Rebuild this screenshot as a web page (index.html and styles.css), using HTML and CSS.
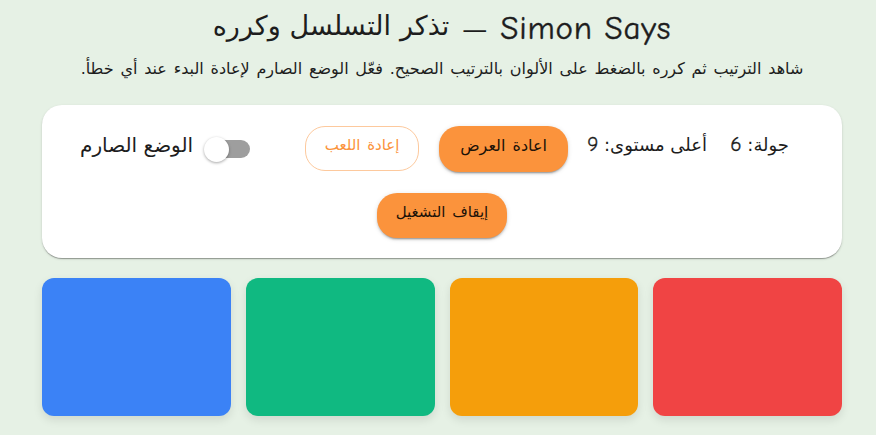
FILE: index.html
```html
<!DOCTYPE html>
<html lang="ar" dir="rtl">
<head>
<meta charset="utf-8">
<title>Simon Says</title>
<link rel="stylesheet" href="styles.css">
</head>
<body>
<main class="game">
  <h1 class="title"><span class="latin" dir="ltr">Simon Says</span><span class="dash">—</span><span class="title-ar">تذكر التسلسل وكرره</span></h1>
  <p class="intro">شاهد الترتيب ثم كرره بالضغط على الألوان بالترتيب الصحيح. فعّل الوضع الصارم لإعادة البدء عند أي خطأ.</p>
  <section class="panel">
    <div class="row">
      <span class="stat round">جولة: <span class="num">6</span></span>
      <span class="stat best">أعلى مستوى: <span class="num">9</span></span>
      <button class="btn filled show">اعادة العرض</button>
      <button class="btn outlined">إعادة اللعب</button>
      <label class="strict"><span class="switch"><i class="knob"></i></span><span class="stat strict-text">الوضع الصارم</span></label>
    </div>
    <div class="row second">
      <button class="btn filled stop">إيقاف التشغيل</button>
    </div>
  </section>
  <section class="pads">
    <div class="pad red"></div>
    <div class="pad amber"></div>
    <div class="pad green"></div>
    <div class="pad blue"></div>
  </section>
</main>
</body>
</html>
```
FILE: styles.css
```css
* { box-sizing: border-box; }
body { margin: 0; height: 435px; overflow: hidden; background: #e6f1e5; color: #1d1d1d; font-family: "DejaVu Sans", sans-serif; }
.game { width: 800px; margin: 0 34px 0 42px; }
.title { display: flex; justify-content: center; align-items: center; gap: 13px; margin: 0; height: 52px; font-weight: 400; white-space: nowrap; }
.latin { font: 400 33px/40px "Comic Neue", "Patrick Hand", cursive, Lato, sans-serif; letter-spacing: .75px; padding-top: 4px; -webkit-text-stroke: .4px #1d1d1d; }
.dash { font-size: 25px; line-height: 30px; padding-top: 7px; }
.title-ar { font-size: 27px; line-height: 46px; word-spacing: .3px; }
.intro { margin: 0; height: 53px; font-size: 16px; line-height: 34px; text-align: center; white-space: nowrap; word-spacing: 1.7px; }
.panel { height: 153px; padding: 21px 53px 0 38px; background: #fff; border-radius: 20px; box-shadow: 0 2px 1px -1px rgba(0,0,0,.2), 0 1px 1px rgba(0,0,0,.14), 0 1px 3px rgba(0,0,0,.12); }
.row { display: flex; align-items: flex-start; gap: 20px; height: 46px; }
.second { justify-content: center; height: 45px; margin: 21px -15px 0 0; }
.stat { font-size: 18px; line-height: 38px; height: 46px; white-space: nowrap; }
.round { width: 62px; }
.best { width: 119px; }
.num { font-family: "Comic Neue", "Patrick Hand", cursive, Lato, sans-serif; font-size: 21px; line-height: 1; -webkit-text-stroke: .3px #1d1d1d; }
.btn { height: 46px; padding: 0 0 7px; border: 0; border-radius: 20px; font-family: "DejaVu Sans", sans-serif; font-size: 15px; text-align: center; white-space: nowrap; word-spacing: 2px; }
.filled { background: #fb933c; color: #1c1208; box-shadow: 0 3px 1px -2px rgba(0,0,0,.2), 0 2px 2px rgba(0,0,0,.14), 0 1px 5px rgba(0,0,0,.12); }
.show { width: 129px; font-size: 16px; }
.outlined { width: 114px; height: 45px; background: #fff; color: #fb933c; border: 1px solid #fdc99d; }
.stop { width: 130px; height: 45px; }
.strict { display: flex; align-items: flex-start; gap: 11px; margin-right: 35px; }
.strict-text { font-size: 20px; }
.switch { position: relative; display: flex; align-items: center; justify-content: flex-end; width: 46px; height: 26px; margin-top: 10px; }
.switch::before { content: ""; position: absolute; top: 4px; right: 0; width: 35px; height: 18px; border-radius: 9px; background: #9e9e9e; }
.knob { position: relative; width: 25px; height: 25px; border-radius: 50%; background: #fff; box-shadow: 0 1px 3px rgba(0,0,0,.35); }
.pads { display: grid; grid-template-columns: repeat(4, 1fr); gap: 15px; margin-top: 20px; }
.pad { height: 138px; border-radius: 12px; box-shadow: 0 4px 10px rgba(0,0,0,.1); }
.red { background: #f04444; }
.amber { background: #f59e0b; }
.green { background: #10b981; }
.blue { background: #3b82f6; }
```
